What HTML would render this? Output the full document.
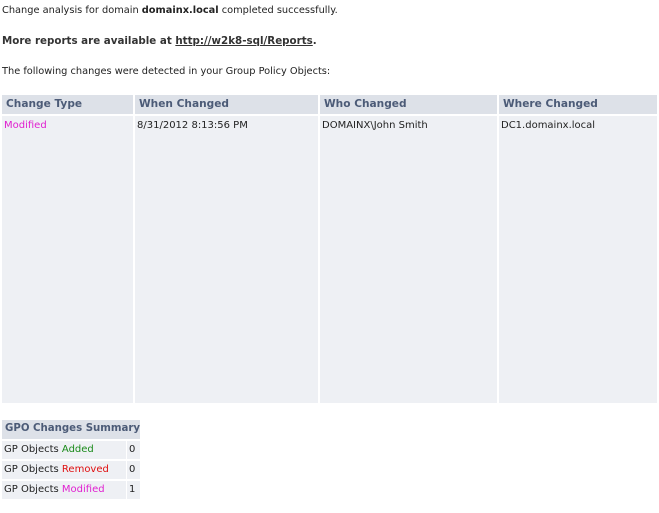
<html><head><style>
body{margin:0;background:#fff;font-family:"DejaVu Sans","Liberation Sans",sans-serif;font-size:9.6px;color:#222;position:relative;width:659px;height:513px;overflow:hidden}
.a{position:absolute;white-space:nowrap}
.h{position:absolute;background:#dde1e8;color:#4c5b77;font-weight:bold;font-size:10.6px;padding:3px 0 0 4px;box-sizing:border-box;white-space:nowrap;overflow:hidden}
.c{position:absolute;background:#eef0f4;padding:4px 0 0 2px;box-sizing:border-box;white-space:nowrap;font-size:10px}
</style></head><body>
<div class="a" style="left:2px;top:5px;font-size:9.8px">Change analysis for domain <b>domainx.local</b> completed successfully.</div>
<div class="a" style="left:2px;top:35px;font-weight:bold;font-size:10.3px;color:#333">More reports are available at <u>http://w2k8-sql/Reports</u>.</div>
<div class="a" style="left:2px;top:66px;font-size:9.8px">The following changes were detected in your Group Policy Objects:</div>
<div class="h" style="left:2px;top:95px;width:131px;height:19px">Change Type</div>
<div class="h" style="left:135px;top:95px;width:183px;height:19px">When Changed</div>
<div class="h" style="left:320px;top:95px;width:177px;height:19px">Who Changed</div>
<div class="h" style="left:499px;top:95px;width:158px;height:19px">Where Changed</div>
<div class="c" style="left:2px;top:116px;width:131px;height:287px;color:#e020d0">Modified</div>
<div class="c" style="left:135px;top:116px;width:183px;height:287px">8/31/2012 8:13:56 PM</div>
<div class="c" style="left:320px;top:116px;width:177px;height:287px">DOMAINX\John Smith</div>
<div class="c" style="left:499px;top:116px;width:158px;height:287px">DC1.domainx.local</div>
<div class="h" style="left:2px;top:420px;width:138px;height:19px;padding-left:3px;font-size:10.2px">GPO Changes Summary</div>
<div class="c" style="left:2px;top:441px;width:124px;height:18px;padding-top:3px">GP Objects <span style="color:#1a8a1a">Added</span></div>
<div class="c" style="left:127px;top:441px;width:13px;height:18px;padding-top:3px">0</div>
<div class="c" style="left:2px;top:461px;width:124px;height:18px;padding-top:3px">GP Objects <span style="color:#e01010">Removed</span></div>
<div class="c" style="left:127px;top:461px;width:13px;height:18px;padding-top:3px">0</div>
<div class="c" style="left:2px;top:481px;width:124px;height:18px;padding-top:3px">GP Objects <span style="color:#e020d0">Modified</span></div>
<div class="c" style="left:127px;top:481px;width:13px;height:18px;padding-top:3px">1</div>
</body></html>
